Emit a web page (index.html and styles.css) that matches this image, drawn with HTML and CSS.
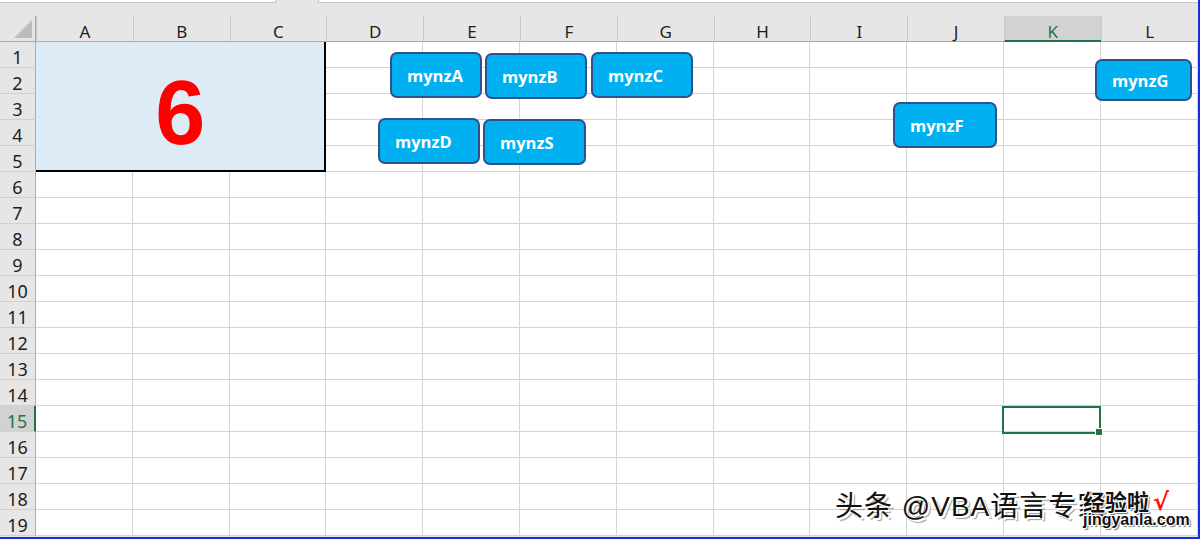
FILE: index.html
```html
<!DOCTYPE html>
<html lang="zh-CN">
<head>
<meta charset="UTF-8">
<title>Sheet1</title>
<link rel="stylesheet" href="styles.css">
</head>
<body>
  <div class="window">
    <div class="formula-bar">
      <div class="fx-name"></div>
      <div class="fx-input"></div>
    </div>

    <div class="sheet" id="sheet">
      <div class="corner"><span class="corner-tri"></span></div>
      <div class="merged"><span class="big-num">6</span></div>
    </div>

    <!-- shapes lying over the sheet -->
    <div class="btn" style="left:390px;top:52px;width:92px">mynzA</div>
    <div class="btn" style="left:485px;top:53px;width:102px">mynzB</div>
    <div class="btn" style="left:591px;top:52px;width:102px">mynzC</div>
    <div class="btn" style="left:378px;top:118px;width:102px">mynzD</div>
    <div class="btn" style="left:483px;top:119px;width:103px">mynzS</div>
    <div class="btn" style="left:893px;top:102px;width:104px">mynzF</div>
    <div class="btn" style="left:1095px;top:59px;width:97px;height:42px">mynzG</div>

    <div class="active-cell"><span class="fill-handle"></span></div>

    <div class="watermark">
      <span class="wm-main">头条 @VBA语言专家</span>
      <span class="wm-site">
        <span class="wm-cn">经验啦</span><span class="wm-check">√</span>
        <span class="wm-url">jingyanla.com</span>
      </span>
    </div>
  </div>

  <script>
    const sheet = document.getElementById('sheet');
    const cols = ['A','B','C','D','E','F','G','H','I','J','K','L'];
    const activeCol = 'K';
    const activeRow = 15;

    // column headers
    cols.forEach(function(c) {
      const h = document.createElement('div');
      h.className = 'col-head' + (c === activeCol ? ' is-active' : '');
      h.textContent = c;
      sheet.appendChild(h);
    });

    // rows
    for (let r = 1; r <= 19; r++) {
      const rh = document.createElement('div');
      rh.className = 'row-head' + (r === activeRow ? ' is-active' : '');
      rh.textContent = r;
      sheet.appendChild(rh);

      cols.forEach(function(c, i) {
        // A1:C5 is merged
        if (r <= 5 && i < 3) return;
        const cell = document.createElement('div');
        cell.className = 'cell';
        sheet.appendChild(cell);
      });
    }
  </script>
</body>
</html>
```

FILE: styles.css
```css
body {
    margin: 0;
    padding: 0;
    background: #fff;
    font-family: "Liberation Sans", Arial, sans-serif;
}

.window {
    position: relative;
    width: 1200px;
    height: 539px;
    overflow: hidden;
    background: #e6e6e6;
    box-sizing: border-box;
    border-right: 2px solid #1d2be0;
    border-bottom: 2px solid #1d2be0;
}

.formula-bar {
    height: 16px;
    display: flex;
    gap: 42px;
}

.fx-name {
    width: 275px;
    height: 2px;
    background: #fff;
    border-bottom: 1px solid #c6c6c6;
    border-right: 1px solid #c6c6c6;
}

.fx-input {
    flex: 1;
    height: 2px;
    background: #fff;
    border-bottom: 1px solid #c6c6c6;
    border-left: 1px solid #c6c6c6;
}

.sheet {
    display: grid;
    grid-template-columns: 36px repeat(12, 96.8px);
    grid-template-rows: repeat(20, 26px);
    background: #fff;
}

.corner {
    position: relative;
    background: #e6e6e6;
    border-right: 1px solid #ababab;
    border-bottom: 1px solid #ababab;
}

.corner-tri {
    position: absolute;
    right: 3px;
    bottom: 3px;
    width: 0;
    height: 0;
    border-left: 18px solid transparent;
    border-bottom: 18px solid #bcbcbc;
}

.col-head {
    background: #e6e6e6;
    border-left: 1px solid #c8c8c8;
    border-bottom: 1px solid #ababab;
    display: flex;
    align-items: center;
    justify-content: center;
    padding-top: 6px;
    box-sizing: border-box;
    font-family: "Noto Sans", sans-serif;
    font-size: 17px;
    color: #1e1e1e;
}

.col-head.is-active {
    background: #d2d2d2;
    color: #217346;
    border-bottom: 2px solid #217346;
}

.row-head {
    background: #e6e6e6;
    border-right: 1px solid #ababab;
    border-bottom: 1px solid #d0d0d0;
    box-sizing: border-box;
    display: flex;
    align-items: center;
    justify-content: center;
    padding-top: 5px;
    font-family: "Noto Sans", sans-serif;
    font-size: 18px;
    color: #1e1e1e;
}

.row-head.is-active {
    background: #d2d2d2;
    color: #217346;
    border-right: 2px solid #217346;
}

.cell {
    border-right: 1px solid #d4d4d4;
    border-bottom: 1px solid #d4d4d4;
    box-sizing: border-box;
}

.merged {
    grid-column: 2 / 5;
    grid-row: 2 / 7;
    background: #ddebf7;
    border-right: 2px solid #000;
    border-bottom: 2px solid #000;
    box-sizing: border-box;
    display: flex;
    align-items: center;
    justify-content: center;
    padding-top: 14px;
}

.big-num {
    font-family: "Liberation Sans", Arial, sans-serif;
    font-weight: bold;
    font-size: 90px;
    line-height: 1;
    color: #ff0000;
}

.btn {
    position: absolute;
    height: 46px;
    box-sizing: border-box;
    background: #00b0f0;
    border: 2px solid #2f528f;
    border-radius: 7px;
    display: flex;
    align-items: center;
    padding-left: 15px;
    font-family: "Open Sans", sans-serif;
    font-weight: bold;
    font-size: 16.5px;
    color: #fff;
}

.active-cell {
    position: absolute;
    left: 1002px;
    top: 406px;
    width: 99px;
    height: 28px;
    box-sizing: border-box;
    border: 2px solid #217346;
}

.fill-handle {
    position: absolute;
    right: -4px;
    bottom: -4px;
    width: 6px;
    height: 6px;
    background: #217346;
    border: 1px solid #fff;
}

.watermark {
    position: absolute;
    left: 835px;
    top: 488px;
    display: flex;
    align-items: flex-start;
}

.wm-main {
    margin-top: 3px;
    font-family: "Liberation Sans", "Noto Sans CJK SC", sans-serif;
    font-size: 28px;
    line-height: 32px;
    letter-spacing: 1px;
    white-space: nowrap;
    color: #111;
    text-shadow: 2px 2px 0 #fff, 3px 3px 1px #999;
}

.wm-site {
    position: absolute;
    left: 248px;
    top: 0;
    width: 110px;
}

.wm-cn {
    font-family: "Noto Sans CJK SC", sans-serif;
    font-weight: bold;
    font-size: 22px;
    line-height: 24px;
    color: #111;
    text-shadow: -1px -1px 0 #fff, 1px -1px 0 #fff, -1px 1px 0 #fff, 1px 1px 0 #fff, 2px 2px 1px #777;
}

.wm-check {
    font-family: "DejaVu Sans", sans-serif;
    font-weight: bold;
    font-size: 24px;
    line-height: 24px;
    color: #ff1010;
    margin-left: 4px;
}

.wm-url {
    display: block;
    margin-top: -3px;
    font-family: "Liberation Sans", sans-serif;
    font-weight: bold;
    font-size: 16px;
    line-height: 18px;
    color: #111;
    text-shadow: -1px -1px 0 #fff, 1px -1px 0 #fff, -1px 1px 0 #fff, 1px 1px 0 #fff, 2px 2px 1px #777;
}
```
